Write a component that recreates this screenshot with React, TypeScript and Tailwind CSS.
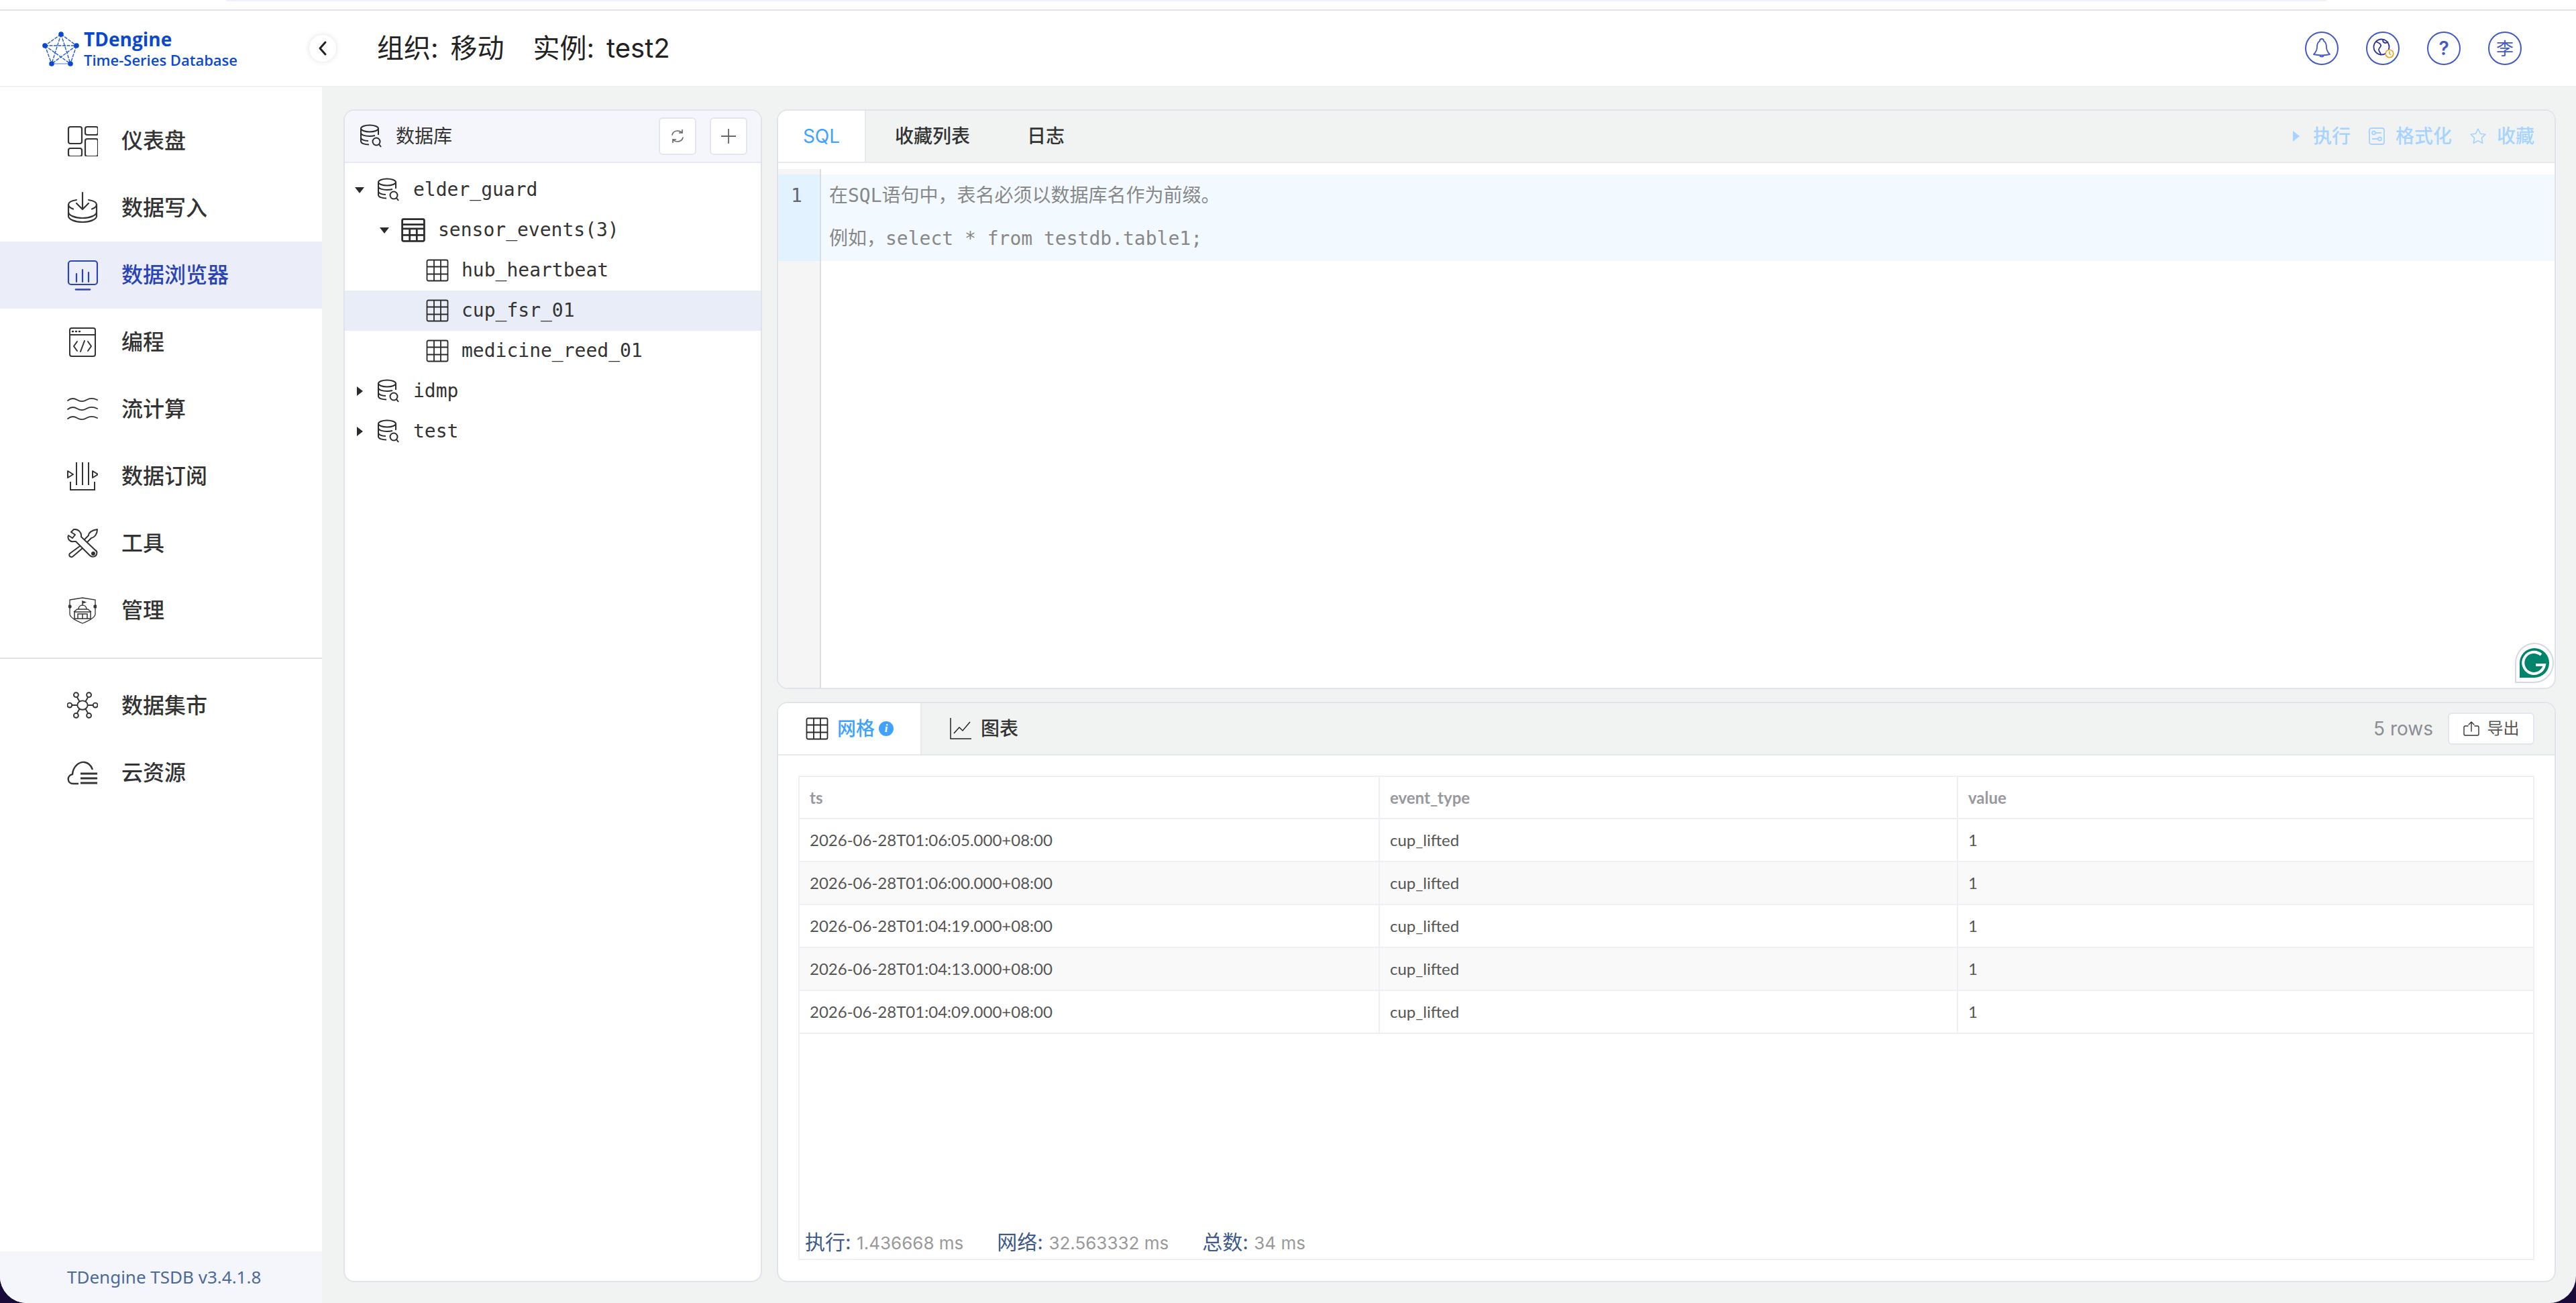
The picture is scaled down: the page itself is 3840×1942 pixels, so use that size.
import React from 'react';

const ink = '#333';

function LogoMark() {
  const pts: [number, number][] = [[28, 5], [4, 22], [51, 22], [14, 49], [42, 49]];
  const links = [[0, 1], [0, 2], [1, 3], [2, 4], [0, 3], [0, 4], [1, 2], [1, 4], [2, 3]];
  return (
    <svg width="55" height="53" viewBox="0 0 55 53" fill="none">
      {links.map(([a, b]) => (
        <line key={`${a}-${b}`} x1={pts[a][0]} y1={pts[a][1]} x2={pts[b][0]} y2={pts[b][1]} stroke="#1f5bd8" strokeWidth="1.4" strokeDasharray="5 1.5" />
      ))}
      <line x1="14" y1="49" x2="42" y2="49" stroke="#8fb0ee" strokeWidth="1.6" />
      {pts.map(([x, y]) => (
        <circle key={`${x}-${y}`} cx={x} cy={y} r="3.8" fill="#0a49cf" />
      ))}
    </svg>
  );
}

function DashboardIcon() {
  return (
    <svg width="46" height="46" viewBox="0 0 46 46" fill="none" stroke={ink} strokeWidth="2.2">
      <rect x="2" y="2" width="20" height="25" rx="3" />
      <rect x="27" y="2" width="19" height="12" rx="3" />
      <rect x="2" y="34" width="20" height="12" rx="3" />
      <rect x="27" y="20" width="19" height="26" rx="3" />
    </svg>
  );
}

function ImportIcon() {
  return (
    <svg width="46" height="50" viewBox="0 0 46 50" fill="none" stroke={ink} strokeWidth="2.2" strokeLinecap="round" strokeLinejoin="round">
      <path d="M23 2v24M14 18l9 9 9-9" />
      <path d="M14 13C7 14 2 16.500 2 20v17c0 5 10 9 21 9s21-4 21-9V20c0-3.500-5-6-12-7" />
      <path d="M2 20c0 3 3 5 7 6.500M44 20c0 3-3 5-7 6.500M2 31c0 5 10 9 21 9s21-4 21-9" />
    </svg>
  );
}

function ExplorerIcon() {
  return (
    <svg width="46" height="46" viewBox="0 0 46 46" fill="none" stroke="#2a44b5" strokeWidth="2.2" strokeLinecap="round">
      <rect x="2" y="2" width="43" height="35" rx="4" />
      <path d="M14 21v12M23 15v18M32 19v14" />
      <path d="M13 44.500h21" strokeWidth="2.600" />
    </svg>
  );
}

function CodeIcon() {
  return (
    <svg width="42" height="46" viewBox="0 0 42 46" fill="none" stroke={ink} strokeWidth="2">
      <rect x="2" y="2" width="38" height="42" rx="3" />
      <path d="M2 12h38" />
      <path d="M6 7h1M11 7h1M16 7h1" strokeWidth="2.500" strokeLinecap="round" />
      <path d="M13 22l-5 7 5 7M29 22l5 7-5 7M24 21l-6 16" strokeLinecap="round" strokeLinejoin="round" />
    </svg>
  );
}

function WavesIcon() {
  return (
    <svg width="46" height="38" viewBox="0 0 46 38" fill="none" stroke={ink} strokeWidth="1.800" strokeLinecap="round">
      <path d="M1 6c5-4 9-4 14-1s9 3 14 0 10-3 16 0" />
      <path d="M1 19c5-4 9-4 14-1s9 3 14 0 10-3 16 0" />
      <path d="M1 33c5-4 9-4 14-1s9 3 14 0 10-3 16 0" />
    </svg>
  );
}

function SubscribeIcon() {
  return (
    <svg width="46" height="44" viewBox="0 0 46 44" fill="none" stroke={ink} strokeWidth="2">
      <path d="M14 1v34M23 1v34M32 1v34" />
      <path d="M5 30v12h36V30" />
      <path d="M1 14l8 5-8 5zM38 14l8 5-8 5z" strokeLinejoin="round" />
    </svg>
  );
}

function ToolsIcon() {
  return (
    <svg width="46" height="44" viewBox="0 0 46 44" fill="none" stroke={ink} strokeWidth="2" strokeLinejoin="round">
      <path d="M10 1L6 5l6 4-4 5-6-4c-2 5 2 10 8 9l3 0 21 21c3 3 9 2 10-2 1-3 0-5-2-6L21 12c1-6-4-12-11-11z" />
      <circle cx="39" cy="37" r="2" fill={ink} />
      <path d="M19 26L4 37c-1 1-1 3 0 4s3 2 5 0l14-12" />
      <path d="M26 16l6-6c0-4 5-8 13-9 0 7-4 12-9 13l-6 6" />
    </svg>
  );
}

function ShieldIcon() {
  return (
    <svg width="42" height="40" viewBox="0 0 42 40" fill="none" stroke={ink} strokeWidth="1.300">
      <path d="M2 4l19-3 19 3v21c0 5-9 10-19 14C11 35 2 30 2 25z" />
      <circle cx="2" cy="14" r="2" fill={ink} />
      <circle cx="40" cy="14" r="2" fill={ink} />
      <path d="M9 32V22h24v10zM14 32V25h14v7M21 25v7M8 22l5-4h16l5 4M15 18c0-4 3-6 6-6s6 2 6 6M21 12V6l4 1.500-4 1.500" strokeWidth="1.500" />
    </svg>
  );
}

function NetworkIcon() {
  const nodes: [number, number][] = [[14, 4], [34, 4], [4, 20], [44, 20], [14, 36], [34, 36]];
  return (
    <svg width="48" height="42" viewBox="0 0 48 42" fill="none" stroke={ink} strokeWidth="2">
      <ellipse cx="24" cy="20" rx="8" ry="7" />
      <path d="M15.500 7.500l4 7M32.500 7.500l-4 7M8 20h8M32 20h8M15.500 32.500l4-7M32.500 32.500l-4-7" />
      {nodes.map(([x, y]) => (
        <circle key={`${x}-${y}`} cx={x} cy={y} r="3.600" />
      ))}
    </svg>
  );
}

function CloudIcon() {
  return (
    <svg width="46" height="36" viewBox="0 0 46 36" fill="none" stroke={ink} strokeWidth="2.400">
      <path d="M17 34H9c-9 0-10-12-1-14C9 8 18 1 26 2c6 1 10 5 12 11" />
      <path d="M20 19h25M20 26h25M20 33h25" strokeWidth="2.800" />
    </svg>
  );
}

function DbIcon({ className }: { className?: string }) {
  return (
    <svg className={className} width="36" height="36" viewBox="0 0 36 36" fill="none" stroke="#2b2b2b" strokeWidth="2">
      <ellipse cx="16" cy="6.500" rx="13" ry="5" />
      <path d="M3 6.500v19c0 3 5 5 12 5M29 6.500V16M3 13c0 3 6 5 13 5 3 0 6-.500 8-1M3 20c0 3 5 5 11 5" />
      <circle cx="26" cy="26" r="5.500" />
      <path d="M30 30l3 4" />
    </svg>
  );
}

function TableIcon({ size = 34, header = false }: { size?: number; header?: boolean }) {
  return (
    <svg width={size} height={size} viewBox="0 0 34 34" fill="none" stroke="#2b2b2b" strokeWidth={header ? 2.600 : 1.800}>
      <rect x="1.500" y="1.500" width="31" height="31" rx="2" />
      {header ? <path d="M1.500 9h31M1.500 15h31M1.500 24h31M12 15v17.500M22 15v17.500" /> : <path d="M1.500 11.500h31M1.500 22.500h31M12 1.500v31M22 1.500v31" />}
    </svg>
  );
}

function Arrow({ open }: { open: boolean }) {
  return (
    <svg width="16" height="16" viewBox="0 0 16 16" fill="#2b2b2b">
      {open ? <path d="M1 4h14l-7 9z" /> : <path d="M4 1v14l9-7z" />}
    </svg>
  );
}

const navItems = [
  { label: '仪表盘', icon: <DashboardIcon /> },
  { label: '数据写入', icon: <ImportIcon /> },
  { label: '数据浏览器', icon: <ExplorerIcon />, active: true },
  { label: '编程', icon: <CodeIcon /> },
  { label: '流计算', icon: <WavesIcon /> },
  { label: '数据订阅', icon: <SubscribeIcon /> },
  { label: '工具', icon: <ToolsIcon /> },
  { label: '管理', icon: <ShieldIcon /> },
];

const extraItems = [
  { label: '数据集市', icon: <NetworkIcon /> },
  { label: '云资源', icon: <CloudIcon /> },
];

const rows = [
  '2026-06-28T01:06:05.000+08:00',
  '2026-06-28T01:06:00.000+08:00',
  '2026-06-28T01:04:19.000+08:00',
  '2026-06-28T01:04:13.000+08:00',
  '2026-06-28T01:04:09.000+08:00',
];

function NavItem({ label, icon, active }: { label: string; icon: React.ReactNode; active?: boolean }) {
  return (
    <div className={`flex h-[100px] items-center pl-[100px] ${active ? 'bg-[#ebeef9]' : ''}`}>
      <span className="flex w-[46px] items-center justify-center">{icon}</span>
      <span className={`ml-[35px] text-[32px] font-medium ${active ? 'text-[#2a44b5]' : 'text-[#333]'}`}>{label}</span>
    </div>
  );
}

function TreeRow({ indent, arrow, icon, label, selected }: { indent: number; arrow?: 'open' | 'closed'; icon: React.ReactNode; label: string; selected?: boolean }) {
  return (
    <div className={`flex h-[60px] items-center ${selected ? 'bg-[#e9edf8]' : ''}`} style={{ paddingLeft: indent }}>
      <span className="flex w-[16px] justify-center">{arrow && <Arrow open={arrow === 'open'} />}</span>
      <span className="ml-[17px] flex items-center">{icon}</span>
      <span className="ml-[19px] font-['DejaVu_Sans_Mono','Noto_Sans_CJK_SC',monospace] text-[28px] text-[#333]">{label}</span>
    </div>
  );
}

function Round({ children }: { children: React.ReactNode }) {
  return <div className="flex h-[50px] w-[50px] items-center justify-center rounded-full border-2 border-[#4359c7] text-[#4359c7]">{children}</div>;
}

function Stat({ label, value, className }: { label: string; value: string; className?: string }) {
  return (
    <span className={className}>
      <span className="text-[30px] text-[#3d5a8a]">{label}: </span>
      <span className="text-[26px] text-[#999]">{value}</span>
    </span>
  );
}

export default function App() {
  return (
    <div className="h-[1942px] w-[3840px] overflow-hidden bg-[#1a0a3a]">
      <div className="flex h-full flex-col overflow-hidden rounded-b-[40px] bg-[#f1f3f3] font-['Inter','Noto_Sans_CJK_SC',sans-serif]">
        {/* Top strip */}
        <div className="h-[16px] shrink-0 border-b-2 border-[#e2e2e2] bg-white">
          <div className="ml-[337px] h-[2px] w-[3132px] rounded-b bg-[#eef2fb]"></div>
        </div>

        {/* Header */}
        <header className="flex h-[114px] shrink-0 items-center border-b-2 border-[#eef0f2] bg-white">
          <div className="ml-[63px] flex w-[398px] items-center">
            <LogoMark />
            <div className="ml-[7px] flex flex-col font-['Open_Sans',sans-serif] text-[#0a49cf]">
              <span className="text-[28px] leading-[34px] font-bold">TDengine</span>
              <span className="text-[22px] leading-[28px] font-semibold">Time-Series Database</span>
            </div>
          </div>
          <button className="flex h-[40px] w-[40px] items-center justify-center rounded-full bg-white shadow-[0_0_8px_rgba(0,0,0,0.12)]">
            <svg width="14" height="24" viewBox="0 0 14 24" fill="none" stroke="#222" strokeWidth="3" strokeLinecap="round" strokeLinejoin="round">
              <path d="M11 3L3 12l8 9" />
            </svg>
          </button>
          <div className="ml-[61px] flex items-center text-[40px] text-[#222]">
            <span>组织:</span>
            <span className="ml-[18px]">移动</span>
            <span className="ml-[43px]">实例:</span>
            <span className="ml-[18px]">test2</span>
          </div>
          <div className="ml-auto mr-[81px] flex items-center gap-[41px]">
            <Round>
              <svg width="26" height="30" viewBox="0 0 26 30" fill="none" stroke="#4359c7" strokeWidth="1.800" strokeLinejoin="round">
                <path d="M13 1c-2 0-3 1-3 3C7 6 6 9 6 13c0 4-2 8-5 11 7 1.500 17 1.500 24 0-3-3-5-7-5-11 0-4-1-7-4-9 0-2-1-3-3-3z" />
                <path d="M10 26c1 2 5 2 6 0" />
              </svg>
            </Round>
            <Round>
              <span className="relative block h-[30px] w-[30px]">
                <svg width="26" height="26" viewBox="0 0 26 26" fill="none" stroke="#2d3191" strokeWidth="1.800" className="absolute left-0 top-0">
                  <circle cx="13" cy="13" r="11.500" />
                  <path d="M5 5c3 2 6 2 7 5s-3 4-3 7 2 3 3 7M15 2c0 3 1 5 4 5s3-2 4-1" />
                </svg>
                <svg width="14" height="14" viewBox="0 0 14 14" fill="#fff" stroke="#f5a317" strokeWidth="1.600" className="absolute bottom-0 right-[-2px]">
                  <circle cx="7" cy="7" r="5.800" />
                  <path d="M7 3.500V7l2 2" fill="none" />
                </svg>
              </span>
            </Round>
            <Round>
              <span className="text-[28px] font-semibold">?</span>
            </Round>
            <Round>
              <span className="text-[26px]">李</span>
            </Round>
          </div>
        </header>

        <div className="flex min-h-0 flex-1">
          {/* Sidebar */}
          <aside className="flex w-[480px] shrink-0 flex-col bg-white pt-[30px]">
            {navItems.map((item) => (
              <NavItem key={item.label} {...item} />
            ))}
            <div className="mb-[20px] mt-[20px] h-[2px] bg-[#e0e2e8]"></div>
            {extraItems.map((item) => (
              <NavItem key={item.label} {...item} />
            ))}
            <div className="mt-auto flex h-[77px] items-center bg-[#f5f6fb] pl-[100px] font-['Noto_Sans',sans-serif] text-[26px] text-[#4a6a9a]">
              TDengine TSDB v3.4.1.8
            </div>
          </aside>

          {/* Main */}
          <main className="flex min-w-0 flex-1 gap-[22px] pb-[31px] pl-[32px] pr-[30px] pt-[33px]">
            {/* Database tree */}
            <section className="flex w-[624px] shrink-0 flex-col rounded-[16px] border-2 border-[#e0e3ea] bg-white">
              <div className="flex h-[78px] shrink-0 items-center rounded-t-[14px] border-b-2 border-[#e6e9f0] bg-[#f5f6fb] pl-[21px] pr-[20px]">
                <DbIcon />
                <span className="ml-[19px] text-[28px] text-[#333]">数据库</span>
                <button className="ml-auto flex h-[56px] w-[56px] items-center justify-center rounded-[6px] border-2 border-[#e3e6ee] bg-white">
                  <svg width="22" height="24" viewBox="0 0 22 24" fill="none" stroke="#666" strokeWidth="1.600" strokeLinecap="round" strokeLinejoin="round">
                    <path d="M3 10C4 6 7 4 11 4c3 0 5 1 7 3M19 14c-1 4-4 6-8 6-3 0-5-1-7-3" />
                    <path d="M18 2.500V7h-4.500M4 21.500V17h4.500" />
                  </svg>
                </button>
                <button className="ml-[20px] flex h-[56px] w-[56px] items-center justify-center rounded-[6px] border-2 border-[#e3e6ee] bg-white">
                  <svg width="26" height="26" viewBox="0 0 26 26" stroke="#666" strokeWidth="1.800">
                    <path d="M13 2v22M2 13h22" />
                  </svg>
                </button>
              </div>
              <div className="pt-[10px]">
                <TreeRow indent={14} arrow="open" icon={<DbIcon />} label="elder_guard" />
                <TreeRow indent={51} arrow="open" icon={<TableIcon size={36} header />} label="sensor_events(3)" />
                <TreeRow indent={88} icon={<TableIcon />} label="hub_heartbeat" />
                <TreeRow indent={88} icon={<TableIcon />} label="cup_fsr_01" selected />
                <TreeRow indent={88} icon={<TableIcon />} label="medicine_reed_01" />
                <TreeRow indent={14} arrow="closed" icon={<DbIcon />} label="idmp" />
                <TreeRow indent={14} arrow="closed" icon={<DbIcon />} label="test" />
              </div>
            </section>

            <div className="flex min-w-0 flex-1 flex-col gap-[19px]">
              {/* SQL editor */}
              <section className="relative flex h-[864px] shrink-0 flex-col rounded-[16px] border-2 border-[#e0e3ea] bg-white">
                <div className="flex h-[78px] shrink-0 items-stretch rounded-t-[14px] border-b-2 border-[#e6e9ee] bg-[#f1f3f3] text-[28px] text-[#333]">
                  <div className="flex w-[131px] items-center justify-center rounded-tl-[14px] border-r-2 border-[#e6e9ee] bg-white text-[#40a2ff]">SQL</div>
                  <div className="ml-[43px] flex items-center font-medium">收藏列表</div>
                  <div className="ml-[85px] flex items-center font-medium">日志</div>
                  <div className="ml-auto mr-[30px] flex items-center text-[#a6d3ff] font-medium">
                    <svg width="12" height="18" viewBox="0 0 12 18" fill="#a6d3ff">
                      <path d="M1 1l10 8-10 8z" />
                    </svg>
                    <span className="ml-[19px]">执行</span>
                    <svg className="ml-[27px]" width="24" height="26" viewBox="0 0 24 26" fill="none" stroke="#a6d3ff" strokeWidth="1.800">
                      <rect x="1" y="1" width="22" height="24" rx="3" />
                      <circle cx="7.500" cy="8" r="2.500" />
                      <circle cx="16.500" cy="17" r="2.500" />
                      <path d="M10 8h9M5 17h9" />
                    </svg>
                    <span className="ml-[16px]">格式化</span>
                    <svg className="ml-[26px]" width="26" height="26" viewBox="0 0 26 26" fill="none" stroke="#a6d3ff" strokeWidth="1.600" strokeLinejoin="round">
                      <path d="M13 2l3.400 7.200 7.600 1-5.600 5.400 1.400 7.900-6.800-3.800-6.800 3.800 1.400-7.900L2 10.200l7.600-1z" />
                    </svg>
                    <span className="ml-[15px]">收藏</span>
                  </div>
                </div>
                <div className="h-[9px] shrink-0"></div>
                <div className="flex min-h-0 flex-1">
                  <div className="w-[64px] shrink-0 rounded-bl-[14px] border-r-2 border-[#dcdde0] bg-[#f5f5f5] pt-[8px]">
                    <div className="h-[129px] bg-[#e2f2ff] pl-[19px] font-['DejaVu_Sans_Mono',monospace] text-[28px] leading-[64px] text-[#666]">1</div>
                  </div>
                  <div className="min-w-0 flex-1 pt-[8px]">
                    <div className="h-[129px] bg-[#f2f9ff] pl-[12px] font-['DejaVu_Sans_Mono','Noto_Sans_CJK_SC',monospace] text-[28px] leading-[64px] text-[#888]">
                      <div>在SQL语句中，表名必须以数据库名作为前缀。</div>
                      <div>例如，select * from testdb.table1;</div>
                    </div>
                  </div>
                </div>
                {/* Grammarly badge */}
                <div className="absolute bottom-[7px] right-[1px] flex h-[60px] w-[58px] items-center justify-center rounded-[50%_50%_50%_0] border-2 border-[#d5d9e4] bg-white">
                  <svg width="46" height="46" viewBox="0 0 46 46">
                    <path d="M23 1a22 22 0 0 1 0 44H1V23A22 22 0 0 1 23 1z" fill="#00846c" />
                    <path d="M33 11a16 16 0 1 0 5 15H25" fill="none" stroke="#fff" strokeWidth="4" />
                  </svg>
                </div>
              </section>

              {/* Results */}
              <section className="flex min-h-0 flex-1 flex-col rounded-[16px] border-2 border-[#e0e3ea] bg-white">
                <div className="flex h-[78px] shrink-0 items-stretch rounded-t-[14px] border-b-2 border-[#e6e9ee] bg-[#f1f3f3] text-[28px] text-[#333]">
                  <div className="flex w-[214px] items-center rounded-tl-[14px] border-r-2 border-[#e6e9ee] bg-white pl-[41px] font-medium text-[#40a2ff]">
                    <TableIcon />
                    <span className="ml-[13px]">网格</span>
                    <span className="ml-[6px] flex h-[22px] w-[22px] items-center justify-center rounded-full bg-[#40a2ff] font-['Liberation_Serif',serif] text-[17px] font-bold italic text-white">i</span>
                  </div>
                  <div className="ml-[42px] flex items-center font-medium">
                    <svg width="32" height="32" viewBox="0 0 32 32" fill="none" stroke="#222" strokeWidth="1.500">
                      <path d="M1 0v31h31" />
                      <path d="M6 23l8-9 5 5 11-13" />
                    </svg>
                    <span className="ml-[14px]">图表</span>
                  </div>
                  <div className="ml-auto mr-[30px] flex items-center">
                    <span className="text-[28px] text-[#8c8c94]">5 rows</span>
                    <button className="ml-[22px] flex h-[48px] w-[129px] items-center justify-center rounded-[6px] border-2 border-[#e3e6ee] bg-white text-[24px] text-[#555]">
                      <svg width="24" height="24" viewBox="0 0 24 24" fill="none" stroke="#333" strokeWidth="1.400" strokeLinecap="round" strokeLinejoin="round">
                        <path d="M7 8H3a2 2 0 0 0-2 2v10a2 2 0 0 0 2 2h18a2 2 0 0 0 2-2V10a2 2 0 0 0-2-2h-4" />
                        <path d="M12 16V2M8 6l4-4 4 4" />
                      </svg>
                      <span className="ml-[12px]">导出</span>
                    </button>
                  </div>
                </div>
                <div className="flex min-h-0 flex-1 flex-col px-[30px] pb-[31px] pt-[30px]">
                  <div className="flex min-h-0 flex-1 flex-col border-2 border-[#edf0f5]">
                    <table className="w-full table-fixed border-collapse font-['Lato',sans-serif] text-[24px] text-[#555]">
                      <colgroup>
                        <col className="w-[864px]" />
                        <col className="w-[862px]" />
                        <col />
                      </colgroup>
                      <thead>
                        <tr className="h-[62px] border-b-2 border-[#edf0f5] text-left text-[#97999f]">
                          <th className="border-r-2 border-[#edf0f5] pl-[15px] font-bold">ts</th>
                          <th className="border-r-2 border-[#edf0f5] pl-[15px] font-bold">event_type</th>
                          <th className="pl-[15px] font-bold">value</th>
                        </tr>
                      </thead>
                      <tbody>
                        {rows.map((ts, i) => (
                          <tr key={ts} className={`h-[64px] border-b-2 border-[#edf0f5] ${i % 2 === 1 ? 'bg-[#f9f9f9]' : ''}`}>
                            <td className="border-r-2 border-[#edf0f5] pl-[15px]">{ts}</td>
                            <td className="border-r-2 border-[#edf0f5] pl-[15px]">cup_lifted</td>
                            <td className="pl-[15px]">1</td>
                          </tr>
                        ))}
                      </tbody>
                    </table>
                    <div className="mt-auto flex h-[50px] items-center pl-[8px]">
                      <Stat label="执行" value="1.436668 ms" />
                      <Stat label="网络" value="32.563332 ms" className="ml-[50px]" />
                      <Stat label="总数" value="34 ms" className="ml-[50px]" />
                    </div>
                  </div>
                </div>
              </section>
            </div>
          </main>
        </div>
      </div>
    </div>
  );
}
